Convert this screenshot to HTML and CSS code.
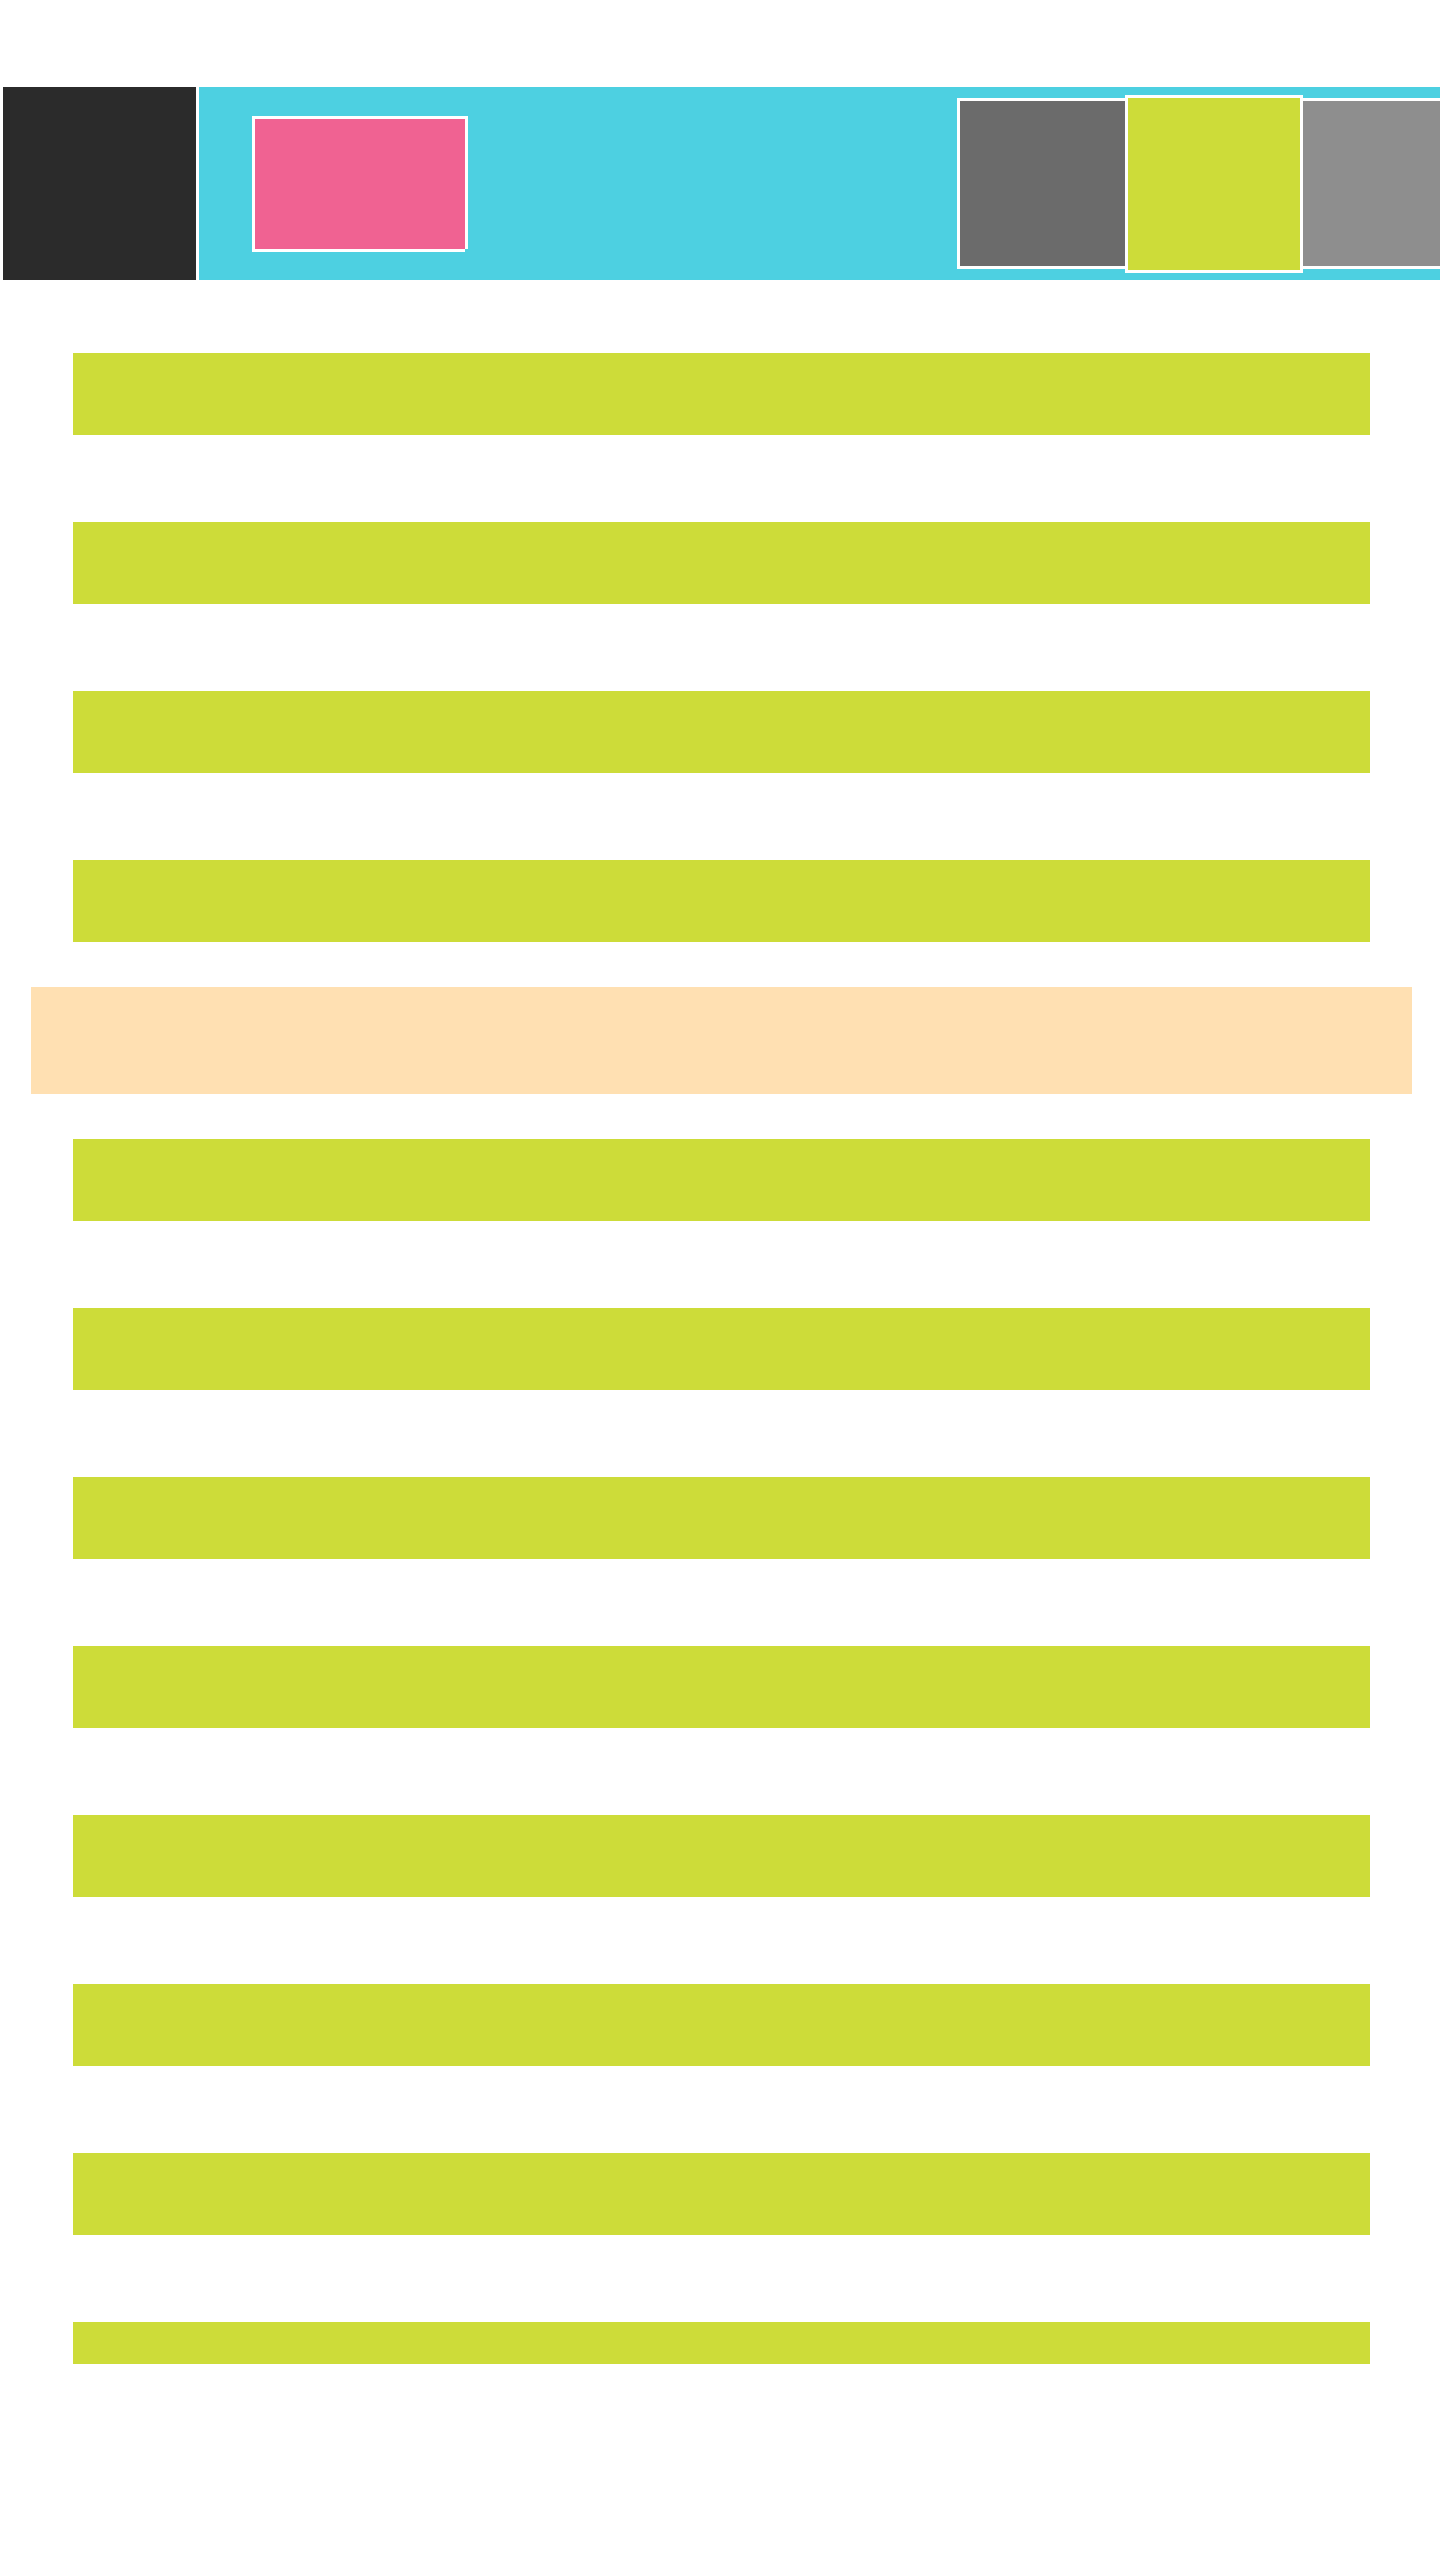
FILE: index.html
```html
<!DOCTYPE html>
<html lang="en">
<head>
<meta charset="utf-8">
<title>Layout</title>
<link rel="stylesheet" href="styles.css">
</head>
<body>
<header class="header">
  <div class="brand"></div>
  <div class="strip">
    <div class="feature"></div>
    <div class="tiles">
      <div class="tile tile-dark"></div>
      <div class="tile tile-active"></div>
      <div class="tile tile-light"></div>
    </div>
  </div>
</header>
<main class="content">
  <div class="bars">
    <div class="bar"></div>
    <div class="bar"></div>
    <div class="bar"></div>
    <div class="bar"></div>
  </div>
  <div class="banner"></div>
  <div class="bars">
    <div class="bar"></div>
    <div class="bar"></div>
    <div class="bar"></div>
    <div class="bar"></div>
    <div class="bar"></div>
    <div class="bar"></div>
    <div class="bar"></div>
    <div class="bar bar-short"></div>
  </div>
</main>
</body>
</html>
```

FILE: styles.css
```css
html, body {
  margin: 0;
  padding: 0;
  background: #ffffff;
  font-family: "Liberation Sans", Arial, sans-serif;
}

.header {
  display: flex;
  height: 193px;
  margin: 87px 0 0 3px;
}

.brand {
  width: 193px;
  flex-shrink: 0;
  background: #2b2b2b;
}

.strip {
  flex: 1;
  margin-left: 3px;
  background: #4dd0e1;
  display: flex;
  align-items: center;
  overflow: hidden;
}

.feature {
  flex-shrink: 0;
  width: 210px;
  height: 130px;
  margin-left: 56px;
  background: #f06292;
  box-shadow:
    -3px 0 0 #ffffff,
    0 -3px 0 #ffffff,
    -3px -3px 0 #ffffff,
    3px -3px 0 #ffffff,
    3px 0 0 #ffffff,
    -3px 3px 0 #ffffff,
    0 3px 0 #ffffff;
}

.tiles {
  display: flex;
  align-items: center;
  margin-left: 492px;
  flex-shrink: 0;
}

.tile {
  flex-shrink: 0;
  width: 165px;
  height: 165px;
  border: 3px solid #ffffff;
}

.tile-dark {
  background: #6b6b6b;
}

.tile-active {
  width: 172px;
  height: 172px;
  margin: 0 -3px;
  background: #cddc39;
  position: relative;
  z-index: 1;
}

.tile-light {
  background: #8e8e8e;
}

.content {
  padding-top: 73px;
}

.bars {
  display: flex;
  flex-direction: column;
  gap: 87px;
}

.bar {
  width: 1297px;
  height: 82px;
  margin-left: 73px;
  background: #cddc39;
}

.bar-short {
  height: 42px;
}

.banner {
  width: 1381px;
  height: 107px;
  margin: 45px 0 45px 31px;
  background: #ffe0b2;
}
```
